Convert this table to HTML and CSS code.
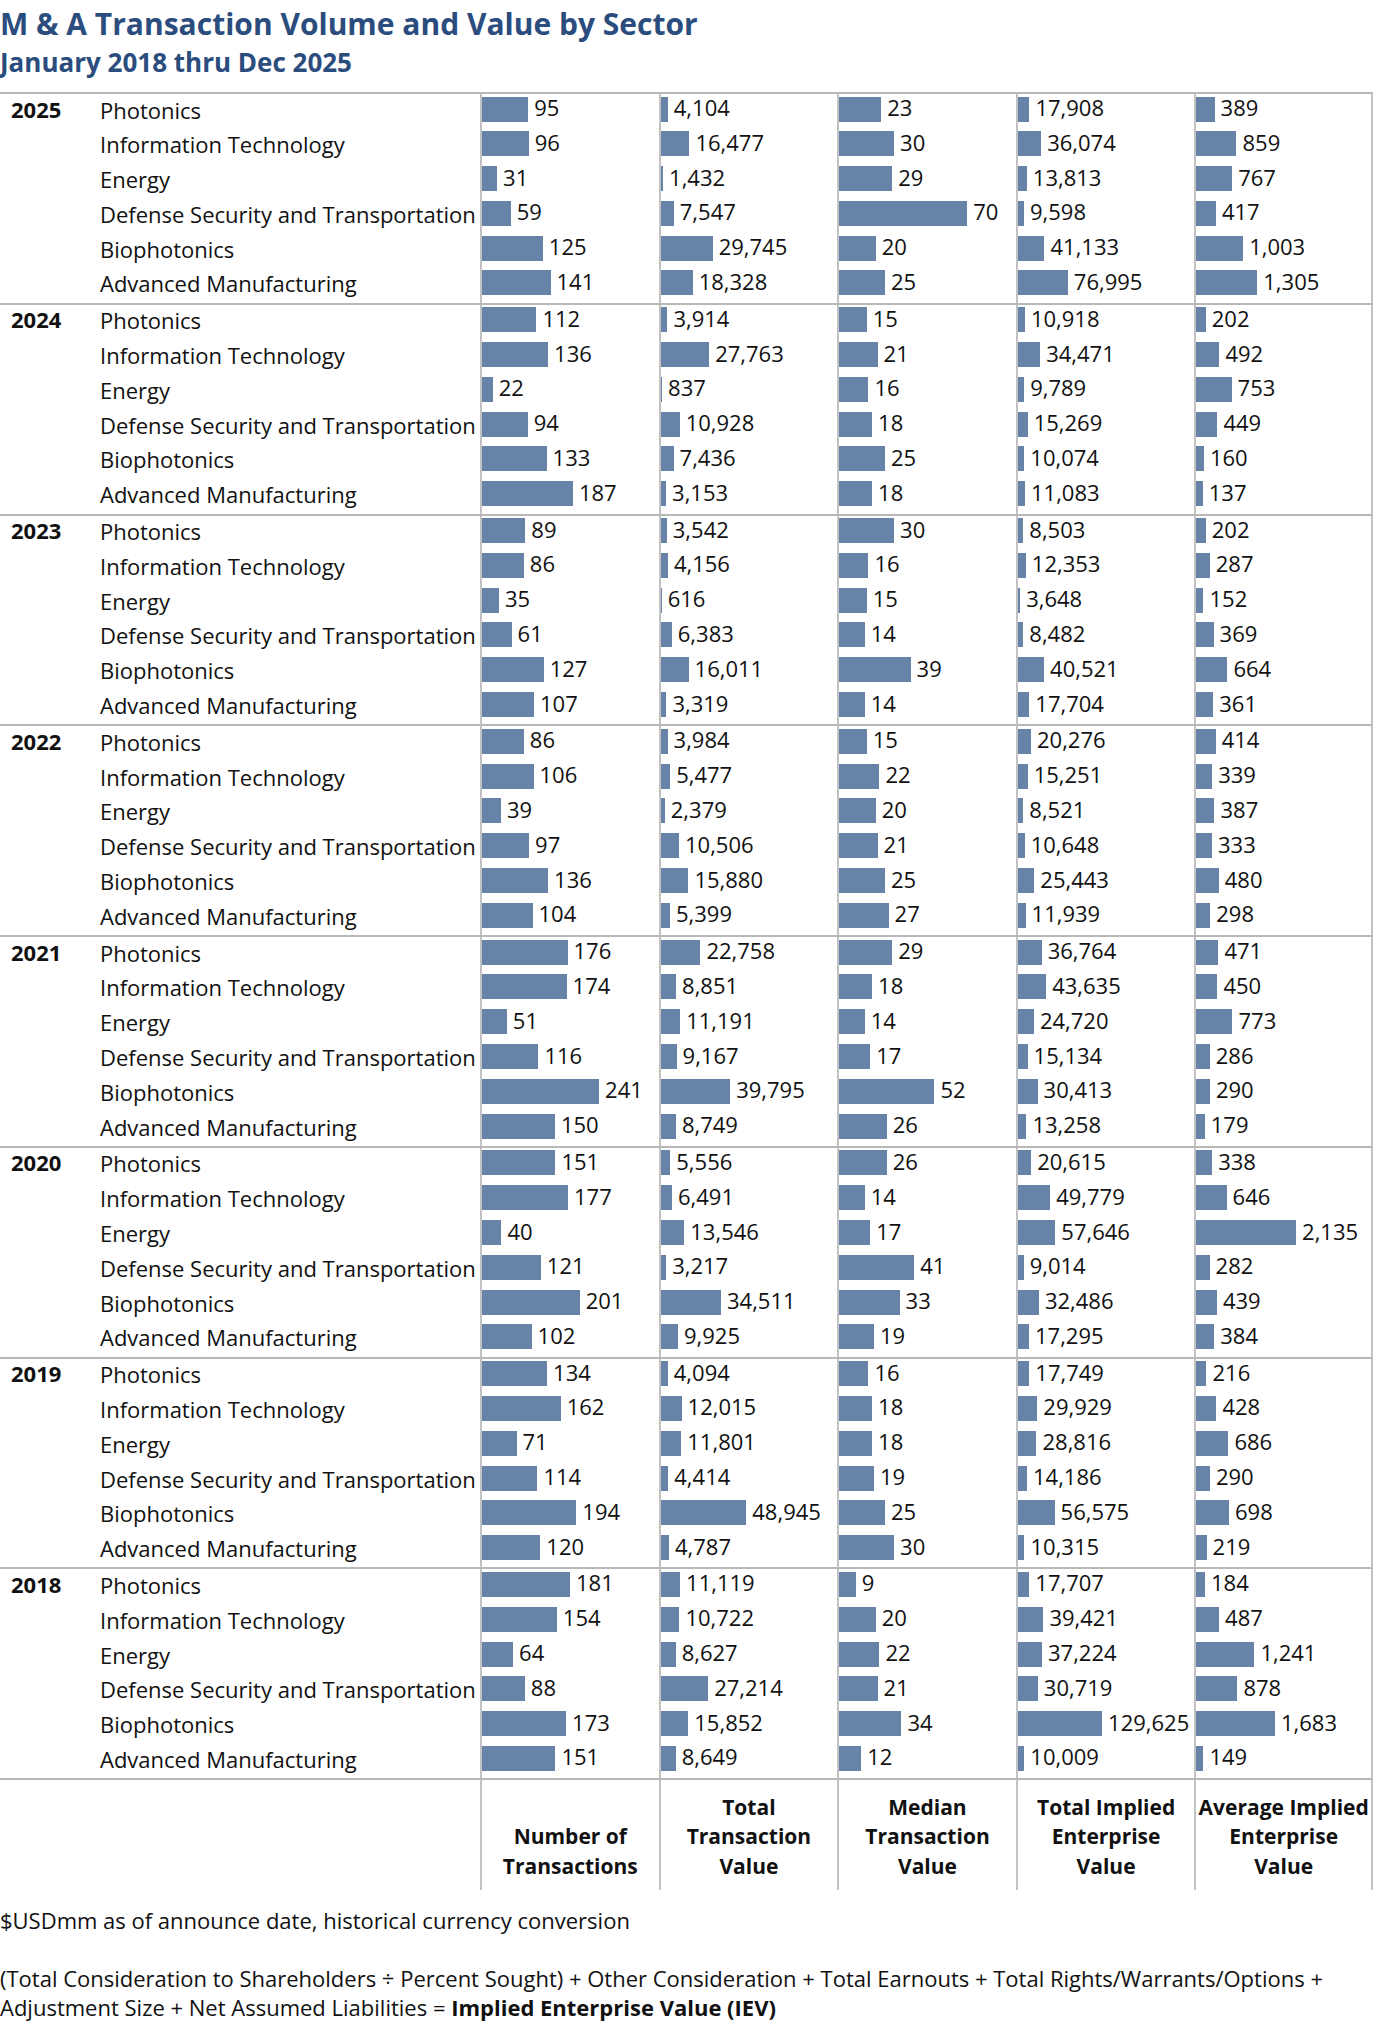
FILE: index.html
```html
<!DOCTYPE html>
<html lang="en">
<head>
<meta charset="utf-8">
<title>M &amp; A Transaction Volume and Value by Sector</title>
<link rel="stylesheet" href="styles.css">
</head>
<body>
<div class="page">
  <h1 class="title">M &amp; A Transaction Volume and Value by Sector</h1>
  <h2 class="subtitle">January 2018 thru Dec 2025</h2>
  <div class="table" id="table"></div>
  <div class="head">
    <div class="head-blank"></div>
    <div class="hcell">Number of<br>Transactions</div>
    <div class="hcell">Total<br>Transaction<br>Value</div>
    <div class="hcell">Median<br>Transaction<br>Value</div>
    <div class="hcell">Total Implied<br>Enterprise<br>Value</div>
    <div class="hcell">Average Implied<br>Enterprise<br>Value</div>
  </div>
  <p class="note">$USDmm as of announce date, historical currency conversion</p>
  <p class="formula">(Total Consideration to Shareholders ÷ Percent Sought) + Other Consideration + Total Earnouts + Total Rights/Warrants/Options + Adjustment Size + Net Assumed Liabilities = <b>Implied Enterprise Value (IEV)</b></p>
</div>
<script src="script.js"></script>
</body>
</html>
```

FILE: styles.css
```css
* { box-sizing: border-box; }
body {
  margin: 0;
  font-family: "Open Sans", "Liberation Sans", sans-serif;
  color: #111;
  background: #fff;
}
.page { width: 1376px; }
.title {
  margin: 0;
  padding-top: 3px;
  font-size: 30px;
  line-height: 42px;
  font-weight: 700;
  color: #2b4d7e;
}
.subtitle {
  margin: 0;
  font-size: 26px;
  line-height: 34px;
  font-weight: 700;
  color: #2b4d7e;
}
.table { margin-top: 13px; width: 1373px; }
.section { border-top: 2px solid #b8b8b8; }
.section:last-child { border-bottom: 2px solid #b8b8b8; }
.row {
  display: grid;
  grid-template-columns: 100px 380px repeat(5, 1fr);
  height: 34.8px;
  line-height: 26px;
}
.year {
  font-weight: 700;
  font-size: 22px;
  padding-left: 11px;
  display: flex;
  align-items: center;
  padding-bottom: 6px;
}
.name {
  font-size: 22px;
  display: flex;
  align-items: center;
  white-space: nowrap;
  padding-bottom: 4px;
}
.cell {
  border-left: 2px solid #c2c2c2;
  display: flex;
  align-items: center;
  gap: 6px;
  padding-bottom: 5px;
  font-size: 22px;
  white-space: nowrap;
}
.cell:last-child { border-right: 2px solid #c2c2c2; }
.num { padding-bottom: 4px; }
.bar {
  flex: none;
  height: 25px;
  background: #6784a8;
}
.head {
  display: grid;
  grid-template-columns: 480px repeat(5, 1fr);
  width: 1373px;
  height: 110px;
}
.hcell {
  border-left: 2px solid #c2c2c2;
  display: flex;
  flex-direction: column;
  justify-content: flex-end;
  text-align: center;
  font-weight: 700;
  font-size: 21px;
  line-height: 29.5px;
  padding-bottom: 9px;
  white-space: nowrap;
}
.hcell:last-child { border-right: 2px solid #c2c2c2; }
.note {
  margin: 16px 0 0;
  font-size: 22px;
  line-height: 29px;
}
.formula {
  margin: 29px 0 0;
  font-size: 22px;
  line-height: 29px;
  width: 1350px;
}
.formula b { font-weight: 700; }
```

FILE: script.js
```js
var sectors = ["Photonics", "Information Technology", "Energy", "Defense Security and Transportation", "Biophotonics", "Advanced Manufacturing"];
var scales = [0.486, 0.00175, 1.83, 0.00065, 0.0467];
var data = [
  [2025, [[95,4104,23,17908,389],[96,16477,30,36074,859],[31,1432,29,13813,767],[59,7547,70,9598,417],[125,29745,20,41133,1003],[141,18328,25,76995,1305]]],
  [2024, [[112,3914,15,10918,202],[136,27763,21,34471,492],[22,837,16,9789,753],[94,10928,18,15269,449],[133,7436,25,10074,160],[187,3153,18,11083,137]]],
  [2023, [[89,3542,30,8503,202],[86,4156,16,12353,287],[35,616,15,3648,152],[61,6383,14,8482,369],[127,16011,39,40521,664],[107,3319,14,17704,361]]],
  [2022, [[86,3984,15,20276,414],[106,5477,22,15251,339],[39,2379,20,8521,387],[97,10506,21,10648,333],[136,15880,25,25443,480],[104,5399,27,11939,298]]],
  [2021, [[176,22758,29,36764,471],[174,8851,18,43635,450],[51,11191,14,24720,773],[116,9167,17,15134,286],[241,39795,52,30413,290],[150,8749,26,13258,179]]],
  [2020, [[151,5556,26,20615,338],[177,6491,14,49779,646],[40,13546,17,57646,2135],[121,3217,41,9014,282],[201,34511,33,32486,439],[102,9925,19,17295,384]]],
  [2019, [[134,4094,16,17749,216],[162,12015,18,29929,428],[71,11801,18,28816,686],[114,4414,19,14186,290],[194,48945,25,56575,698],[120,4787,30,10315,219]]],
  [2018, [[181,11119,9,17707,184],[154,10722,20,39421,487],[64,8627,22,37224,1241],[88,27214,21,30719,878],[173,15852,34,129625,1683],[151,8649,12,10009,149]]]
];
function fmt(n) { return n.toString().replace(/\B(?=(\d{3})+(?!\d))/g, ","); }
var table = document.getElementById("table");
data.forEach(function (sec) {
  var s = document.createElement("div");
  s.className = "section";
  sec[1].forEach(function (vals, i) {
    var r = document.createElement("div");
    r.className = "row";
    var y = document.createElement("div");
    y.className = "year";
    y.textContent = i === 0 ? sec[0] : "";
    r.appendChild(y);
    var n = document.createElement("div");
    n.className = "name";
    n.textContent = sectors[i];
    r.appendChild(n);
    vals.forEach(function (v, j) {
      var c = document.createElement("div");
      c.className = "cell";
      var b = document.createElement("span");
      b.className = "bar";
      b.style.width = (v * scales[j]).toFixed(1) + "px";
      var t = document.createElement("span");
      t.className = "num";
      t.textContent = fmt(v);
      c.appendChild(b);
      c.appendChild(t);
      r.appendChild(c);
    });
    s.appendChild(r);
  });
  table.appendChild(s);
});
```
